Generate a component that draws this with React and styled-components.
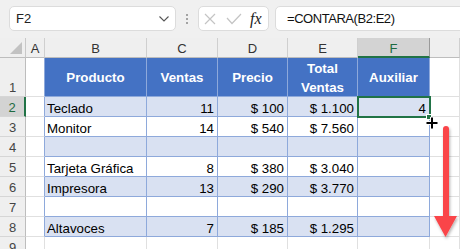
import React from "react";
import styled, { createGlobalStyle } from "styled-components";

const Global = createGlobalStyle`
  html, body { margin: 0; padding: 0; background: #ffffff; overflow: hidden; }
  body { font-family: "Liberation Sans", Arial, sans-serif; }
  * { box-sizing: border-box; }
`;

const Page = styled.div`
  width: 460px;
  height: 249px;
  overflow: hidden;
  background: #ffffff;
`;

const Toolbar = styled.div`
  height: 38px;
  background: #f0f0f0;
  display: flex;
  align-items: flex-start;
  padding: 6px 0 0 9px;
`;

const Box = styled.div`
  height: 25px;
  background: #ffffff;
  border: 1px solid #dcdcdc;
  border-radius: 5px;
  display: flex;
  align-items: center;
`;

const NameBox = styled(Box)`
  width: 167px;
  padding: 0 6px 0 6px;
  justify-content: space-between;
  font-size: 13px;
  color: #222;
`;

const Dots = styled.div`
  width: 22px;
  height: 25px;
  display: flex;
  flex-direction: column;
  align-items: center;
  justify-content: center;
  gap: 2px;
  span {
    width: 2px;
    height: 2px;
    background: #8a8a8a;
    border-radius: 1px;
  }
`;

const FuncBox = styled(Box)`
  width: 71px;
  padding: 0 0 0 5px;
  gap: 10px;
`;

const Fx = styled.span`
  font-family: "Liberation Serif", "Times New Roman", serif;
  font-style: italic;
  font-size: 16px;
  color: #222;
  margin-left: -2px;
`;

const FormulaBox = styled(Box)`
  flex: 1;
  margin-left: 6px;
  margin-right: -12px;
  padding-left: 11px;
  font-size: 13px;
  letter-spacing: -0.45px;
  color: #111;
`;

const Sheet = styled.div`
  position: relative;
  display: grid;
  grid-template-columns: 26px 19px 102px 71px 70px 70px 72px 1fr;
  grid-template-rows: 20px 39px repeat(8, 20px);
  font-size: 13.3px;
`;

const Corner = styled.div`
  background: #efefef;
  border-right: 1px solid #c8c8c8;
  border-bottom: 1px solid #bdbdbd;
  position: relative;
  &::after {
    content: "";
    position: absolute;
    right: 3px;
    bottom: 3px;
    border-style: solid;
    border-width: 0 0 12px 12px;
    border-color: transparent transparent #c2c2c2 transparent;
  }
`;

const ColHead = styled.div`
  background: ${(p) => (p.$active ? "#d3d3d3" : "#efefef")};
  color: ${(p) => (p.$active ? "#1e6b41" : "#333")};
  border-right: 1px solid ${(p) => (p.$active ? "#9a9a9a" : "#cfcfcf")};
  border-bottom: ${(p) => (p.$active ? "2px solid #217346" : "1px solid #bdbdbd")};
  display: flex;
  align-items: center;
  justify-content: center;
  padding-top: 2px;
  font-size: 13px;
`;

const RowHead = styled.div`
  background: ${(p) => (p.$active ? "#d3d3d3" : "#efefef")};
  color: ${(p) => (p.$active ? "#1e6b41" : "#444")};
  border-right: ${(p) => (p.$active ? "2px solid #217346" : "1px solid #bdbdbd")};
  border-bottom: 1px solid #d6d6d6;
  display: flex;
  align-items: flex-end;
  justify-content: center;
  line-height: 15px;
  padding-bottom: 1px;
  font-size: 13px;
`;

const colors = {
  head: { bg: "#4472c4", line: "#8ea9db" },
  band: { bg: "#d9e1f2", line: "#8ea9db" },
  plain: { bg: "#ffffff", line: "#8ea9db" },
  empty: { bg: "#ffffff", line: "#e0e0e0" },
};

const Cell = styled.div`
  background: ${(p) => colors[p.$kind].bg};
  border-right: 1px solid ${(p) => (p.$edge ? "#8ea9db" : colors[p.$kind].line)};
  border-bottom: 1px solid ${(p) => colors[p.$kind].line};
  display: flex;
  align-items: flex-end;
  justify-content: ${(p) => (p.$right ? "flex-end" : "flex-start")};
  padding: 0 3px 0 2px;
  line-height: 15px;
  color: #000;
  white-space: nowrap;
  overflow: hidden;
`;

const HeadCell = styled(Cell)`
  align-items: center;
  justify-content: center;
  text-align: center;
  white-space: pre-line;
  line-height: 19px;
  padding: 1px 2px 0 2px;
  color: #ffffff;
  font-weight: bold;
`;

const Selection = styled.div`
  position: absolute;
  left: 357px;
  top: 58px;
  width: 74px;
  height: 22px;
  border: 2px solid #217346;
  pointer-events: none;
`;

const Handle = styled.div`
  position: absolute;
  left: 426px;
  top: 76px;
  width: 6px;
  height: 6px;
  background: #217346;
  border: 1px solid #ffffff;
`;

const Cursor = styled.svg`
  position: absolute;
  left: 425px;
  top: 78px;
`;

const Arrow = styled.svg`
  position: absolute;
  left: 430px;
  top: 84px;
  overflow: visible;
`;

const letters = ["A", "B", "C", "D", "E", "F", ""];

const rows = [
  { n: 1, kind: "head", cells: ["Producto", "Ventas", "Precio", "Total\nVentas", "Auxiliar"] },
  { n: 2, kind: "band", cells: ["Teclado", "11", "$ 100", "$ 1.100", "4"] },
  { n: 3, kind: "plain", cells: ["Monitor", "14", "$ 540", "$ 7.560", ""] },
  { n: 4, kind: "band", cells: ["", "", "", "", ""] },
  { n: 5, kind: "plain", cells: ["Tarjeta Gráfica", "8", "$ 380", "$ 3.040", ""] },
  { n: 6, kind: "band", cells: ["Impresora", "13", "$ 290", "$ 3.770", ""] },
  { n: 7, kind: "plain", cells: ["", "", "", "", ""] },
  { n: 8, kind: "band", cells: ["Altavoces", "7", "$ 185", "$ 1.295", ""] },
  { n: 9, kind: "empty", cells: ["", "", "", "", ""] },
];

export default function App() {
  return (
    <Page>
      <Global />
      <Toolbar>
        <NameBox>
          <span>F2</span>
          <svg width="10" height="6" viewBox="0 0 10 6">
            <path d="M0.5 0.5 L5 5 L9.5 0.5" fill="none" stroke="#555" strokeWidth="1.1" />
          </svg>
        </NameBox>
        <Dots>
          <span />
          <span />
          <span />
        </Dots>
        <FuncBox>
          <svg width="12" height="12" viewBox="0 0 12 12">
            <path d="M1 1 L11 11 M11 1 L1 11" stroke="#c4c4c4" strokeWidth="1.2" />
          </svg>
          <svg width="16" height="12" viewBox="0 0 16 12">
            <path d="M1 5 L6 10.5 L15 1" fill="none" stroke="#c4c4c4" strokeWidth="1.2" />
          </svg>
          <Fx>fx</Fx>
        </FuncBox>
        <FormulaBox>=CONTARA(B2:E2)</FormulaBox>
      </Toolbar>
      <Sheet>
        <Corner />
        {letters.map((l, i) => (
          <ColHead key={i} $active={l === "F"}>
            {l}
          </ColHead>
        ))}
        {rows.map((r) => (
          <React.Fragment key={r.n}>
            <RowHead $active={r.n === 2}>{r.n}</RowHead>
            <Cell $kind="empty" $edge={r.kind !== "empty"} />
            {r.cells.map((c, i) =>
              r.kind === "head" ? (
                <HeadCell key={i} $kind="head">
                  {c}
                </HeadCell>
              ) : (
                <Cell key={i} $kind={r.kind} $right={i > 0}>
                  {c}
                </Cell>
              )
            )}
            <Cell $kind="empty" />
          </React.Fragment>
        ))}
        <Selection />
        <Handle />
        <Cursor width="14" height="14" viewBox="0 0 14 14">
          <path d="M7 1 V13 M1 7 H13" stroke="#ffffff" strokeWidth="4" />
          <path d="M7 1.5 V12.5 M1.5 7 H12.5" stroke="#000000" strokeWidth="2" />
        </Cursor>
        <Arrow width="30" height="120" viewBox="0 0 30 120">
          <defs>
            <filter id="sh" x="-50%" y="-20%" width="200%" height="140%">
              <feDropShadow dx="1" dy="2" stdDeviation="1.5" floodColor="#000" floodOpacity="0.3" />
            </filter>
          </defs>
          <g filter="url(#sh)">
            <path d="M13 7 Q13 4 16 4 Q19 4 19 7 V96 H13 Z" fill="#fa4448" />
            <path d="M4 94 H27 L15.5 115 Z" fill="#fa4448" />
          </g>
        </Arrow>
      </Sheet>
    </Page>
  );
}
